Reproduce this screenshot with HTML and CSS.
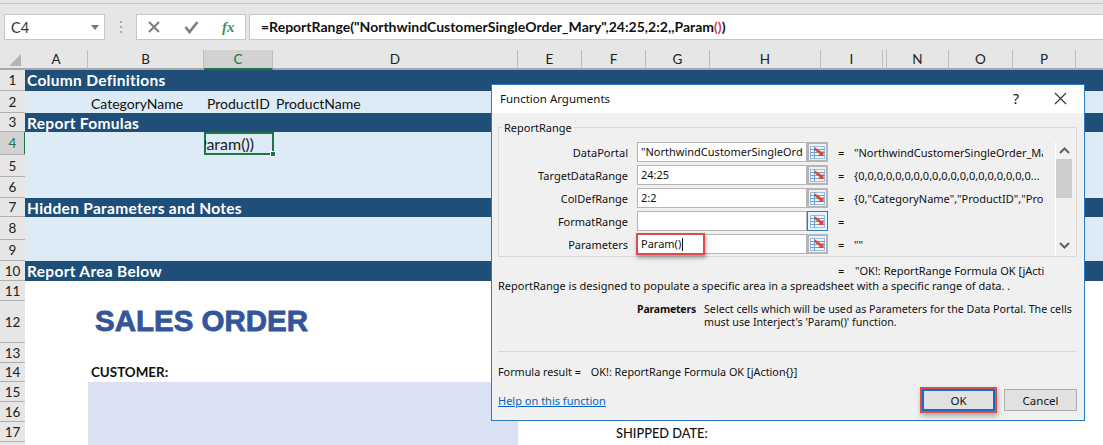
FILE: index.html
```html
<!doctype html>
<html>
<head>
<meta charset="utf-8">
<title>Function Arguments</title>
<link rel="stylesheet" href="styles.css">
</head>

<body>
<svg class="defs" width="0" height="0">
	<symbol id="rangeicon" viewBox="0 0 15 13">
		<rect x="0.5" y="0.5" width="14" height="12" fill="#eef4fa" stroke="#9dbfdf"/>
		<path d="M0 3.5H15M0 6.5H15M0 9.5H15M4.5 0V13" stroke="#6ea3d4" fill="none"/>
		<path d="M5 1.5L12 6L13.5 4.5L13.5 10L8 10L9.7 8.3L4 3.5Z" fill="#dc4a32"/>
	</symbol>
</svg>
<div class="page">
	<div class="menuline"></div>
	<div class="formulabar">
		<div class="namebox"><span>C4</span><i class="caret"></i></div>
		<div class="grip"><i></i><i></i><i></i></div>
		<div class="fxbox">
			<svg width="14" height="14" viewBox="0 0 14 14"><path d="M2 2L12 12M12 2L2 12" stroke="#7d7d7d" stroke-width="2" fill="none"/></svg>
			<svg width="15" height="14" viewBox="0 0 15 14"><path d="M1.5 7L5.5 12L13.5 2" stroke="#7d7d7d" stroke-width="2.6" fill="none"/></svg>
			<span class="fx">fx</span>
		</div>
		<div class="formula">=ReportRange("NorthwindCustomerSingleOrder_Mary",24:25,2:2,,Param<span class="paren">()</span>)</div>
	</div>

	<div class="sheet">
		<div class="corner"><svg width="14" height="14" viewBox="0 0 14 14"><path d="M13 1V13H1Z" fill="#b5b5b5"/></svg></div>
		<div class="col">A</div>
		<div class="col">B</div>
		<div class="col col-on">C</div>
		<div class="col">D</div>
		<div class="col">E</div>
		<div class="col">F</div>
		<div class="col">G</div>
		<div class="col">H</div>
		<div class="col">I</div>
		<div class="col col-gap"></div>
		<div class="col">N</div>
		<div class="col">O</div>
		<div class="col">P</div>
		<div class="col col-end"></div>

		<div class="rownum">1</div>
		<div class="band band-first">Column Definitions</div>

		<div class="rownum">2</div>
		<div class="fill"></div>
		<div class="cell">CategoryName</div>
		<div class="cell">ProductID</div>
		<div class="cell">ProductName</div>
		<div class="fill fill-rest"></div>

		<div class="rownum">3</div>
		<div class="band">Report Fomulas</div>

		<div class="rownum rownum-on">4</div>
		<div class="fill fill-ab"></div>
		<div class="selected"><div class="seltext">Param())</div><i class="handle"></i></div>
		<div class="fill fill-drest"></div>

		<div class="rownum">5</div>
		<div class="fill fill-all"></div>
		<div class="rownum">6</div>
		<div class="fill fill-all"></div>

		<div class="rownum">7</div>
		<div class="band">Hidden Parameters and Notes</div>

		<div class="rownum">8</div>
		<div class="fill fill-all"></div>
		<div class="rownum">9</div>
		<div class="fill fill-all"></div>

		<div class="rownum">10</div>
		<div class="band">Report Area Below</div>

		<div class="rownum">11</div>
		<div class="blank"></div>

		<div class="rownum">12</div>
		<div class="title">SALES ORDER</div>

		<div class="rownum">13</div>
		<div class="blank"></div>

		<div class="rownum">14</div>
		<div class="customer">CUSTOMER:</div>

		<div class="rownum">15</div>
		<div class="custfill"></div>
		<div class="blank blank-e"></div>
		<div class="rownum">16</div>
		<div class="blank blank-e"></div>
		<div class="rownum">17</div>
		<div class="shipped">SHIPPED DATE:</div>
		<div class="rownum">18</div>
		<div class="blank blank-e"></div>
	</div>

	<div class="dialog">
		<div class="titlebar">
			<span class="dlgtitle">Function Arguments</span>
			<span class="help">?</span>
			<svg class="close" width="13" height="13" viewBox="0 0 13 13"><path d="M1 1L12 12M12 1L1 12" stroke="#333" stroke-width="1.1" fill="none"/></svg>
		</div>
		<div class="dlgbody">
			<div class="group">
				<span class="legend">ReportRange</span>
				<div class="args">
					<div class="arg">
						<label>DataPortal</label>
						<div class="input">"NorthwindCustomerSingleOrd</div>
						<div class="rangebtn"><svg width="15" height="13"><use href="#rangeicon"/></svg></div>
						<span class="eq">=</span>
						<span class="val">"NorthwindCustomerSingleOrder_Mary"</span>
					</div>
					<div class="arg">
						<label>TargetDataRange</label>
						<div class="input">24:25</div>
						<div class="rangebtn"><svg width="15" height="13"><use href="#rangeicon"/></svg></div>
						<span class="eq">=</span>
						<span class="val">{0,0,0,0,0,0,0,0,0,0,0,0,0,0,0,0,0,0,0...</span>
					</div>
					<div class="arg">
						<label>ColDefRange</label>
						<div class="input">2:2</div>
						<div class="rangebtn"><svg width="15" height="13"><use href="#rangeicon"/></svg></div>
						<span class="eq">=</span>
						<span class="val">{0,"CategoryName","ProductID","Prod</span>
					</div>
					<div class="arg">
						<label>FormatRange</label>
						<div class="input"></div>
						<div class="rangebtn rangebtn-on"><svg width="15" height="13"><use href="#rangeicon"/></svg></div>
						<span class="eq">=</span>
						<span class="val"></span>
					</div>
					<div class="arg">
						<label>Parameters</label>
						<div class="input input-mark">Param()<i class="cursor"></i></div>
						<div class="rangebtn"><svg width="15" height="13"><use href="#rangeicon"/></svg></div>
						<span class="eq">=</span>
						<span class="val">""</span>
					</div>
				</div>
				<div class="scroll">
					<svg class="arrow" width="11" height="7" viewBox="0 0 11 7"><path d="M1 6L5.5 1.5L10 6" stroke="#606060" stroke-width="2" fill="none"/></svg>
					<div class="thumb"></div>
					<svg class="arrow" width="11" height="7" viewBox="0 0 11 7"><path d="M1 1L5.5 5.5L10 1" stroke="#606060" stroke-width="2" fill="none"/></svg>
				</div>
			</div>
			<div class="result">
				<span class="eq">=</span>
				<span class="val">"OK!: ReportRange Formula OK [jAction{}]"</span>
			</div>
			<p class="desc">ReportRange is designed to populate a specific area in a spreadsheet with a specific range of data. .</p>
			<div class="argdesc">
				<b>Parameters</b>
				<p>Select cells which will be used as Parameters for the Data Portal. The cells<br>must use Interject's 'Param()' function.</p>
			</div>
			<div class="divider"></div>
			<div class="fresult"><span>Formula result =</span><span>OK!: ReportRange Formula OK [jAction{}]</span></div>
			<div class="dlgfoot">
				<a class="helplink" href="#">Help on this function</a>
				<button class="btn btn-ok">OK</button>
				<button class="btn">Cancel</button>
			</div>
		</div>
	</div>
</div>
</body>
</html>
```

FILE: styles.css
```css
*{ margin:0; padding:0; box-sizing:border-box;}
html,body{ width:1103px; height:445px; overflow:hidden; background:#fff;}
.defs{ position:absolute;}
.page{ position:relative; width:1103px; height:445px; overflow:hidden; font-family:'Lato','Liberation Sans',sans-serif; color:#111;}

.menuline{ height:4px; background:#e6e6e6; border-bottom:1px solid #c8c8c8;}
.formulabar{ height:46px; background:#e6e6e6; display:flex; align-items:flex-start; padding:10px 0 0 4px;}
.namebox{ width:101px; height:26px; background:#fff; border:1px solid #c6c6c6; display:flex; align-items:center; justify-content:space-between; padding:0 5px 0 6px; font-size:14.5px; color:#333;}
.caret{ width:0; height:0; border-left:4px solid transparent; border-right:4px solid transparent; border-top:5px solid #777;}
.grip{ width:31px; height:26px; display:flex; flex-direction:column; align-items:center; justify-content:center; gap:3px;}
.grip i{ width:2px; height:2px; background:#aaa;}
.fxbox{ width:110px; height:26px; background:#fff; border:1px solid #c6c6c6; display:flex; align-items:center; gap:23px; padding-left:10px;}
.fx{ font-family:'Liberation Serif',serif; font-style:italic; font-weight:bold; font-size:15px; color:#3f9264;}
.formula{ flex:1; height:26px; margin-left:3px; background:#fff; border:1px solid #c6c6c6; border-right:0; padding-left:11px; font-size:14px; font-weight:700; line-height:24px; white-space:nowrap;}
.paren{ color:#c8385a;}

.sheet{ display:grid; grid-template-columns:25px 63px 116px 69px 245px 64px 64px 64px 111px 62px 4px 62px 64px 63px 27px; grid-template-rows:20px 21px 22px 19px 23px 22px 21px 19px 23px 21px 20px 20px 42px 20px 19px 20px 20px 20px 20px;}
.corner{ background:#e6e6e6; border-bottom:2px solid #a8a8a8; display:flex; align-items:flex-end; justify-content:flex-end; padding:0 3px 1px 0;}
.col{ background:#e6e6e6; border-right:1px solid #bdbdbd; border-bottom:2px solid #a8a8a8; font-size:13.5px; line-height:18px; text-align:center; color:#222;}
.col-on{ background:#d2d2d2; border-bottom:2px solid #217346; color:#217346;}
.col-end{ border-right:0;}
.rownum{ grid-column:1; background:#e6e6e6; border-bottom:1px solid #b0b0b0; font-size:13.5px; text-align:center; display:flex; align-items:center; justify-content:center; color:#222;}
.rownum-on{ background:#d2d2d2; color:#217346; box-shadow:inset -1px 0 #217346;}
.band{ grid-column:2 / -1; background:#1f4e78; color:#fff; font-weight:700; font-size:15.5px; padding-left:2px; display:flex; align-items:center; letter-spacing:.3px;}
.band-first{ padding-bottom:2px;}
.fill{ background:#ddebf7;}
.fill-all{ grid-column:2 / -1;}
.fill-ab{ grid-column:2 / 4;}
.fill-drest{ grid-column:5 / -1;}
.fill-rest{ grid-column:6 / -1;}
.cell{ background:#ddebf7; font-size:14px; display:flex; align-items:center; white-space:nowrap; padding:2px 0 0 3px;}
.selected{ position:relative; z-index:1; background:#ddebf7; border:2px solid #217346; font-size:16px; line-height:19px; margin-right:-1px; display:flex; justify-content:flex-end; padding-right:18px;}
.seltext{ width:49px; flex:none; overflow:hidden; white-space:nowrap; color:#222; display:flex; justify-content:flex-end;}
.handle{ position:absolute; right:-4px; bottom:-4px; width:6px; height:6px; background:#217346; border:1px solid #fff;}
.blank{ grid-column:2 / -1;}
.blank-e{ grid-column:6 / -1;}
.title{ grid-column:2 / -1; padding-left:70px; font-family:'Liberation Sans',sans-serif; font-weight:700; font-size:29.5px; color:#34559b; -webkit-text-stroke:.8px #34559b; line-height:40px;}
.customer{ grid-column:2 / -1; padding-left:66px; font-size:13.4px; font-weight:700; line-height:19px;}
.custfill{ background:#d9e1f2; grid-column:3 / 6; grid-row:16 / span 4;}
.shipped{ grid-column:6 / -1; padding-left:98px; font-size:12.8px; font-weight:500; line-height:22px;}

.dialog{ position:absolute; z-index:2; left:491px; top:84px; width:594px; height:337px; border:1px solid #2b7ac4; background:#f0f0f0; font-family:'Noto Sans','Liberation Sans',sans-serif; font-size:11px; color:#111;}
.titlebar{ height:28px; background:#fff; display:flex; align-items:center; padding:0 17px 2px 8px; font-size:11.5px;}
.dlgtitle{ flex:1;}
.help{ margin-right:35px; font-size:14px;}
.dlgbody{ padding:14px 7px 0 6px;}
.group{ position:relative; height:130px; border:1px solid #d8d8d8; display:flex; padding:14px 0 0 0;}
.legend{ position:absolute; left:4px; top:-8px; background:#f0f0f0; padding:0 1px; font-size:11px;}
.args{ width:554px; display:flex; flex-direction:column; gap:3px;}
.arg{ display:grid; grid-template-columns:129px 179px 21px 26px 189px; height:20px; align-items:center; white-space:nowrap;}
.arg .input{ margin-left:9px; width:170px;}
.arg label{ text-align:right;}
.input{ height:20px; background:#fff; border:1px solid #b5b5b5; padding-left:3px; line-height:18px; font-size:11px; overflow:hidden; white-space:nowrap; display:flex; align-items:center;}
.input-mark{ position:relative; overflow:visible;}
.input-mark::after{ content:""; position:absolute; left:-2px; top:-2px; width:65px; height:18px; border:2px solid #e04a4a; box-shadow:1px 3px 4px rgba(0,0,0,.35);}
.cursor{ display:inline-block; width:1px; height:13px; background:#111; margin-left:1px;}
.rangebtn{ width:21px; height:20px; background:#f0f0f0; border:2px solid #b5b5b5; display:flex; align-items:center; justify-content:center;}
.rangebtn svg{ flex:none;}
.rangebtn-on{ border:1px solid #2b7ac4; background:#e5f1fb;}
.eq{ padding-left:10px;}
.val{ overflow:hidden; white-space:nowrap; display:block;}
.scroll{ margin:0 0 0 2px; width:17px; height:114px; border-left:1px solid #fff; display:flex; flex-direction:column; align-items:center; padding:5px 0 0 0;}
.arrow{ flex:none;}
.thumb{ width:16px; height:39px; background:#cdcdcd; margin:5px 0 44px;}
.result{ margin-top:7px; height:14px; display:grid; grid-template-columns:331px 26px 189px; line-height:14px; white-space:nowrap;}
.result .eq{ grid-column:2; padding-left:9px;}
.result .val{ grid-column:3;}
.desc{ line-height:16px; white-space:nowrap;}
.argdesc{ margin-top:9px; display:flex; line-height:13px; height:48px;}
.argdesc b{ width:198px; text-align:right; flex:none; font-size:10.5px; letter-spacing:-.2px;}
.argdesc p{ margin-left:8px; font-size:10.7px; white-space:nowrap;}
.divider{ height:1px; background:#d8d8d8;}
.fresult{ margin-top:13px; display:flex; gap:10px; line-height:14px; font-size:10.8px;}
.dlgfoot{ margin-top:10px; display:flex; align-items:center;}
.helplink{ color:#0563c1; text-decoration:underline; font-size:11px; flex:1;}
.btn{ width:73px; height:22px; margin-left:9px; background:#e1e1e1; border:1px solid #adadad; font-family:'Noto Sans','Liberation Sans',sans-serif; font-size:11.5px; color:#111;}
.btn-ok{ border:2px solid #0f6fc6; outline:2px solid #e04a4a; box-shadow:1px 3px 5px 2px rgba(0,0,0,.3);}
```
